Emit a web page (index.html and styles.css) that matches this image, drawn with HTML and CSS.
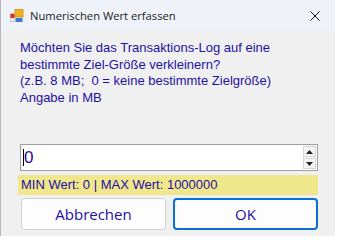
FILE: index.html
```html
<!DOCTYPE html>
<html>
<head>
<meta charset="utf-8">
<link rel="stylesheet" href="styles.css">
</head>
<body>
<div class="window">
  <div class="titlebar">
    <svg class="appicon" width="14" height="14" viewBox="0 0 14 14">
      <rect x="0" y="4" width="5" height="9" fill="#c8c8c8"/>
      <rect x="0.5" y="5" width="4" height="4" fill="#d83020"/>
      <rect x="0.5" y="9" width="4" height="3" fill="#e8e8e8"/>
      <rect x="5" y="0" width="8" height="8" fill="#f0b020" stroke="#d08a10" stroke-width="0.8"/>
      <rect x="5.5" y="9" width="7" height="4" fill="#3a7ad8"/>
    </svg>
    <span class="title">Numerischen Wert erfassen</span>
    <svg class="close" width="10" height="10" viewBox="0 0 10 10">
      <path d="M0.5 0.5 L9.5 9.5 M9.5 0.5 L0.5 9.5" stroke="#1a1a1a" stroke-width="1"/>
    </svg>
  </div>
  <div class="content">
    <p class="message">Möchten Sie das Transaktions-Log auf eine<br>bestimmte Ziel-Größe verkleinern?<br>(z.B. 8 MB;&nbsp; 0 = keine bestimmte Zielgröße)<br>Angabe in MB</p>
    <div class="spinbox">
      <span class="caret"></span><span class="value">0</span>
      <div class="spin">
        <div class="spinbtn"><svg width="7" height="4" viewBox="0 0 7 4"><path d="M0 4 L3.5 0 L7 4 Z" fill="#222"/></svg></div>
        <div class="spinbtn"><svg width="7" height="4" viewBox="0 0 7 4"><path d="M0 0 L3.5 4 L7 0 Z" fill="#222"/></svg></div>
      </div>
    </div>
    <div class="range">MIN Wert: 0 | MAX Wert: 1000000</div>
    <div class="buttons">
      <button class="btn">Abbrechen</button>
      <button class="btn primary">OK</button>
    </div>
  </div>
</div>
</body>
</html>
```
FILE: styles.css
```css
html, body {
  margin: 0;
  padding: 0;
  background: #ffffff;
}
.window {
  width: 335px;
  height: 236px;
  background: #f0f0f0;
  border-left: 1px solid #b8b8b8;
  box-sizing: border-box;
  display: flex;
  flex-direction: column;
}
.titlebar {
  height: 31px;
  background: #eff3f9;
  display: flex;
  align-items: center;
  padding-left: 9px;
  box-sizing: border-box;
  flex: none;
}
.appicon {
  margin-top: 1px;
}
.title {
  margin-left: 6px;
  font-family: "Open Sans", "Noto Sans", sans-serif;
  font-size: 11.2px;
  color: #1a1a1a;
  flex: 1;
}
.close {
  margin-right: 15px;
  margin-top: 1px;
}
.content {
  padding: 9px 0 0 19px;
  display: flex;
  flex-direction: column;
}
.message {
  margin: 0;
  font-family: "Liberation Sans", sans-serif;
  font-size: 13px;
  line-height: 16.5px;
  color: #1e10a0;
}
.spinbox {
  margin-top: 38px;
  width: 298px;
  height: 27px;
  box-sizing: border-box;
  background: #ffffff;
  border: 1px solid #a0a0a0;
  display: flex;
  align-items: center;
  position: relative;
}
.caret {
  width: 1px;
  height: 17px;
  background: #000;
  margin-left: 2px;
}
.value {
  font-family: "Liberation Sans", sans-serif;
  font-size: 17px;
  color: #1e10a0;
  flex: 1;
}
.spin {
  display: flex;
  flex-direction: column;
  gap: 1px;
  margin-right: 1px;
}
.spinbtn {
  width: 13px;
  height: 11px;
  background: #f4f4f4;
  border: 1px solid #d4d4d4;
  box-sizing: border-box;
  display: flex;
  align-items: center;
  justify-content: center;
}
.range {
  margin-top: 4px;
  margin-left: -2px;
  width: 300px;
  height: 20px;
  background: #f0e68c;
  font-family: "Liberation Sans", sans-serif;
  font-size: 13px;
  line-height: 20px;
  padding-left: 3px;
  box-sizing: border-box;
  color: #1e10a0;
}
.buttons {
  margin-top: 3px;
  display: flex;
  gap: 7px;
  margin-left: 1px;
}
.btn {
  width: 145px;
  height: 32px;
  background: #fdfdfd;
  border: 1px solid #d0d0d0;
  border-radius: 4px;
  font-family: "Open Sans", "Noto Sans", sans-serif;
  font-size: 15px;
  color: #1e10a0;
  padding: 0;
}
.btn.primary {
  border: 2px solid #0a6fd0;
}
```
